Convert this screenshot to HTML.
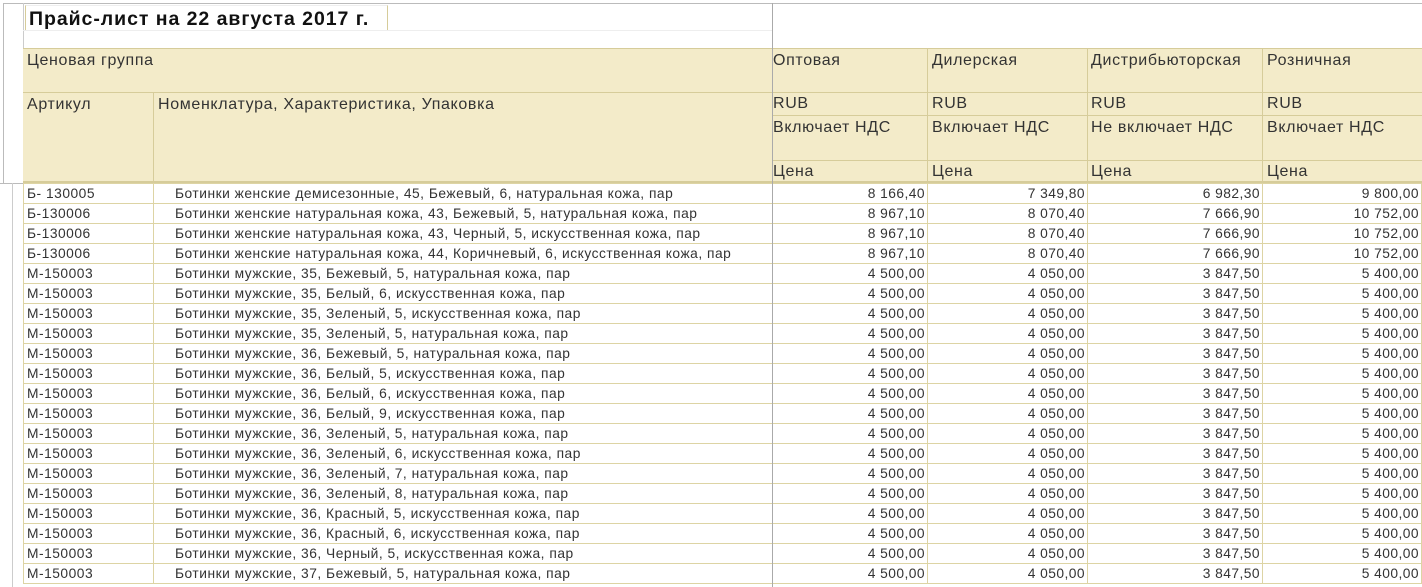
<!DOCTYPE html>
<html><head><meta charset="utf-8"><style>
body{margin:0;width:1422px;height:587px;overflow:hidden;background:#fff;font-family:"Liberation Sans",sans-serif;position:relative;color:#222}
.a{position:absolute;box-sizing:border-box}
.y{background:#f3ebc9}
.h{font-size:16px;letter-spacing:0.65px;color:#333;white-space:nowrap}
table{position:absolute;left:23px;top:183px;border-collapse:collapse;table-layout:fixed;font-size:13.8px;letter-spacing:0.5px;color:#333}
td{height:19px;border:1px solid #ddd4a4;padding:0 2px 0 3px;white-space:nowrap;overflow:hidden;line-height:19px}
td.r{text-align:right;letter-spacing:0.45px}
td.n{padding-left:21px}
</style></head><body>
<div class="a" style="left:3px;top:3px;width:1419px;height:1px;background:#bbb"></div>
<div class="a" style="left:3px;top:3px;width:1px;height:181px;background:#bbb"></div>
<div class="a" style="left:0;top:183px;width:24px;height:1px;background:#bbb"></div>
<div class="a" style="left:12px;top:183px;width:1px;height:404px;background:#ccc"></div>
<div class="a" style="left:23px;top:3px;width:1px;height:180px;background:#ccc"></div>
<div class="a" style="left:772px;top:3px;width:1px;height:584px;background:#aaa;z-index:3"></div>
<div class="a" style="left:25px;top:5px;width:363px;height:26px;border:1px solid #d6cc9a;border-top-color:#eee;font-weight:bold;font-size:19.5px;letter-spacing:0.95px;padding:2px 0 0 3px;color:#111;white-space:nowrap">Прайс-лист на 22 августа 2017 г.</div>
<div class="a" style="left:23px;top:30px;width:749px;height:1px;background:#eee"></div>
<div class="a y" style="left:23px;top:48px;width:1399px;height:135px;border-top:1px solid #d6cc9a;border-bottom:2px solid #d6cc9a"></div>
<div class="a" style="left:23px;top:92px;width:1399px;height:1px;background:#d6cc9a"></div>
<div class="a" style="left:772px;top:115px;width:650px;height:1px;background:#d6cc9a"></div>
<div class="a" style="left:772px;top:160px;width:650px;height:1px;background:#d6cc9a"></div>
<div class="a" style="left:153px;top:92px;width:1px;height:91px;background:#d6cc9a"></div>
<div class="a" style="left:927px;top:48px;width:1px;height:135px;background:#d6cc9a"></div>
<div class="a" style="left:1087px;top:48px;width:1px;height:135px;background:#d6cc9a"></div>
<div class="a" style="left:1262px;top:48px;width:1px;height:135px;background:#d6cc9a"></div>
<div class="a h" style="left:27px;top:52px">Ценовая группа</div>
<div class="a h" style="left:27px;top:96px">Артикул</div>
<div class="a h" style="left:158px;top:96px">Номенклатура, Характеристика, Упаковка</div>
<div class="a h" style="left:773px;top:52px">Оптовая</div>
<div class="a h" style="left:932px;top:52px">Дилерская</div>
<div class="a h" style="left:1091px;top:52px">Дистрибьюторская</div>
<div class="a h" style="left:1267px;top:52px">Розничная</div>
<div class="a h" style="left:773px;top:95px">RUB</div><div class="a h" style="left:932px;top:95px">RUB</div><div class="a h" style="left:1091px;top:95px">RUB</div><div class="a h" style="left:1267px;top:95px">RUB</div>
<div class="a h" style="left:773px;top:119px">Включает НДС</div><div class="a h" style="left:932px;top:119px">Включает НДС</div><div class="a h" style="left:1091px;top:119px">Не включает НДС</div><div class="a h" style="left:1267px;top:119px">Включает НДС</div>
<div class="a h" style="left:773px;top:163px">Цена</div><div class="a h" style="left:932px;top:163px">Цена</div><div class="a h" style="left:1091px;top:163px">Цена</div><div class="a h" style="left:1267px;top:163px">Цена</div>
<table>
<colgroup><col style="width:130px"><col style="width:619px"><col style="width:155px"><col style="width:160px"><col style="width:175px"><col style="width:159px"></colgroup>
<tr><td>Б- 130005</td><td class="n">Ботинки женские демисезонные, 45, Бежевый, 6, натуральная кожа, пар</td><td class="r">8 166,40</td><td class="r">7 349,80</td><td class="r">6 982,30</td><td class="r">9 800,00</td></tr>
<tr><td>Б-130006</td><td class="n">Ботинки женские натуральная кожа, 43, Бежевый, 5, натуральная кожа, пар</td><td class="r">8 967,10</td><td class="r">8 070,40</td><td class="r">7 666,90</td><td class="r">10 752,00</td></tr>
<tr><td>Б-130006</td><td class="n">Ботинки женские натуральная кожа, 43, Черный, 5, искусственная кожа, пар</td><td class="r">8 967,10</td><td class="r">8 070,40</td><td class="r">7 666,90</td><td class="r">10 752,00</td></tr>
<tr><td>Б-130006</td><td class="n">Ботинки женские натуральная кожа, 44, Коричневый, 6, искусственная кожа, пар</td><td class="r">8 967,10</td><td class="r">8 070,40</td><td class="r">7 666,90</td><td class="r">10 752,00</td></tr>
<tr><td>М-150003</td><td class="n">Ботинки мужские, 35, Бежевый, 5, натуральная кожа, пар</td><td class="r">4 500,00</td><td class="r">4 050,00</td><td class="r">3 847,50</td><td class="r">5 400,00</td></tr>
<tr><td>М-150003</td><td class="n">Ботинки мужские, 35, Белый, 6, искусственная кожа, пар</td><td class="r">4 500,00</td><td class="r">4 050,00</td><td class="r">3 847,50</td><td class="r">5 400,00</td></tr>
<tr><td>М-150003</td><td class="n">Ботинки мужские, 35, Зеленый, 5, искусственная кожа, пар</td><td class="r">4 500,00</td><td class="r">4 050,00</td><td class="r">3 847,50</td><td class="r">5 400,00</td></tr>
<tr><td>М-150003</td><td class="n">Ботинки мужские, 35, Зеленый, 5, натуральная кожа, пар</td><td class="r">4 500,00</td><td class="r">4 050,00</td><td class="r">3 847,50</td><td class="r">5 400,00</td></tr>
<tr><td>М-150003</td><td class="n">Ботинки мужские, 36, Бежевый, 5, натуральная кожа, пар</td><td class="r">4 500,00</td><td class="r">4 050,00</td><td class="r">3 847,50</td><td class="r">5 400,00</td></tr>
<tr><td>М-150003</td><td class="n">Ботинки мужские, 36, Белый, 5, искусственная кожа, пар</td><td class="r">4 500,00</td><td class="r">4 050,00</td><td class="r">3 847,50</td><td class="r">5 400,00</td></tr>
<tr><td>М-150003</td><td class="n">Ботинки мужские, 36, Белый, 6, искусственная кожа, пар</td><td class="r">4 500,00</td><td class="r">4 050,00</td><td class="r">3 847,50</td><td class="r">5 400,00</td></tr>
<tr><td>М-150003</td><td class="n">Ботинки мужские, 36, Белый, 9, искусственная кожа, пар</td><td class="r">4 500,00</td><td class="r">4 050,00</td><td class="r">3 847,50</td><td class="r">5 400,00</td></tr>
<tr><td>М-150003</td><td class="n">Ботинки мужские, 36, Зеленый, 5, натуральная кожа, пар</td><td class="r">4 500,00</td><td class="r">4 050,00</td><td class="r">3 847,50</td><td class="r">5 400,00</td></tr>
<tr><td>М-150003</td><td class="n">Ботинки мужские, 36, Зеленый, 6, искусственная кожа, пар</td><td class="r">4 500,00</td><td class="r">4 050,00</td><td class="r">3 847,50</td><td class="r">5 400,00</td></tr>
<tr><td>М-150003</td><td class="n">Ботинки мужские, 36, Зеленый, 7, натуральная кожа, пар</td><td class="r">4 500,00</td><td class="r">4 050,00</td><td class="r">3 847,50</td><td class="r">5 400,00</td></tr>
<tr><td>М-150003</td><td class="n">Ботинки мужские, 36, Зеленый, 8, натуральная кожа, пар</td><td class="r">4 500,00</td><td class="r">4 050,00</td><td class="r">3 847,50</td><td class="r">5 400,00</td></tr>
<tr><td>М-150003</td><td class="n">Ботинки мужские, 36, Красный, 5, искусственная кожа, пар</td><td class="r">4 500,00</td><td class="r">4 050,00</td><td class="r">3 847,50</td><td class="r">5 400,00</td></tr>
<tr><td>М-150003</td><td class="n">Ботинки мужские, 36, Красный, 6, искусственная кожа, пар</td><td class="r">4 500,00</td><td class="r">4 050,00</td><td class="r">3 847,50</td><td class="r">5 400,00</td></tr>
<tr><td>М-150003</td><td class="n">Ботинки мужские, 36, Черный, 5, искусственная кожа, пар</td><td class="r">4 500,00</td><td class="r">4 050,00</td><td class="r">3 847,50</td><td class="r">5 400,00</td></tr>
<tr><td>М-150003</td><td class="n">Ботинки мужские, 37, Бежевый, 5, натуральная кожа, пар</td><td class="r">4 500,00</td><td class="r">4 050,00</td><td class="r">3 847,50</td><td class="r">5 400,00</td></tr>
</table>
</body></html>
